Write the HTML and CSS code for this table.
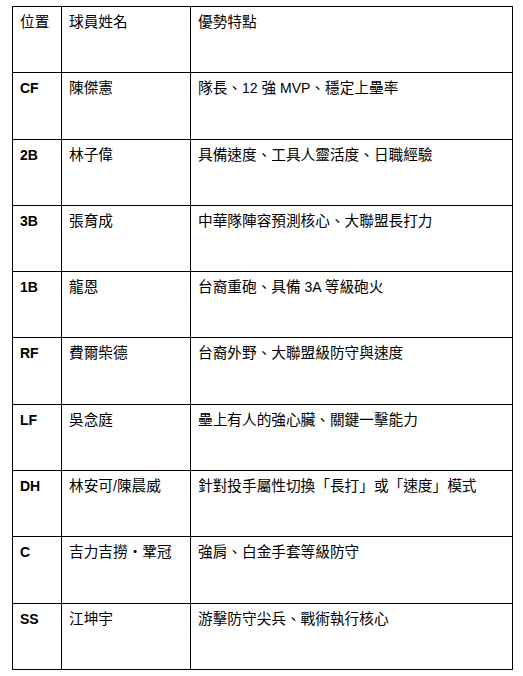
FILE: index.html
```html
<!DOCTYPE html>
<html lang="zh-Hant">
<head>
<meta charset="utf-8">
<title>球員</title>
<link rel="stylesheet" href="styles.css">
</head>
<body>
<table class="roster">
  <colgroup>
    <col class="c-pos">
    <col class="c-name">
    <col class="c-note">
  </colgroup>
  <tr><td>位置</td><td>球員姓名</td><td>優勢特點</td></tr>
  <tr><td class="pos">CF</td><td>陳傑憲</td><td>隊長、<span class="lat">12 </span>強<span class="lat"> MVP</span>、穩定上壘率</td></tr>
  <tr><td class="pos">2B</td><td>林子偉</td><td>具備速度、工具人靈活度、日職經驗</td></tr>
  <tr><td class="pos">3B</td><td>張育成</td><td>中華隊陣容預測核心、大聯盟長打力</td></tr>
  <tr><td class="pos">1B</td><td>龍恩</td><td>台裔重砲、具備<span class="lat"> 3A </span>等級砲火</td></tr>
  <tr><td class="pos">RF</td><td>費爾柴德</td><td>台裔外野、大聯盟級防守與速度</td></tr>
  <tr><td class="pos">LF</td><td>吳念庭</td><td>壘上有人的強心臟、關鍵一擊能力</td></tr>
  <tr><td class="pos">DH</td><td>林安可<span class="lat">/</span>陳晨威</td><td>針對投手屬性切換「長打」或「速度」模式</td></tr>
  <tr><td class="pos">C</td><td>吉力吉撈・鞏冠</td><td>強肩、白金手套等級防守</td></tr>
  <tr><td class="pos">SS</td><td>江坤宇</td><td>游擊防守尖兵、戰術執行核心</td></tr>
</table>
</body>
</html>
```
FILE: styles.css
```css
html, body {
  margin: 0;
  padding: 0;
  background: #fff;
}
body {
  padding: 6px 0 0 12px;
  font-family: "Liberation Sans", "Noto Sans CJK TC", sans-serif;
  font-size: 14.67px;
  color: #000;
}
.roster {
  border-collapse: collapse;
  table-layout: fixed;
  width: 500px;
}
.c-pos { width: 49px; }
.c-name { width: 129px; }
.c-note { width: 322px; }
.roster tr {
  height: 66.3px;
}
.roster td {
  border: 1px solid #000;
  padding: 7px 7px;
  vertical-align: top;
  line-height: 17px;
  white-space: nowrap;
  text-spacing-trim: space-all;
}
.roster td.pos {
  font-weight: bold;
  font-size: 14px;
}
.lat {
  font-size: 14px;
}
```
